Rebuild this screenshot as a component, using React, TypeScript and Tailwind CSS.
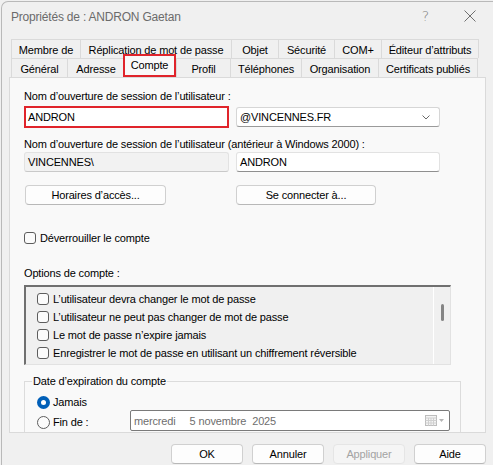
import React from 'react';

type Tab = { label: string; w: string; active?: boolean };

const backTabs: Tab[] = [
  { label: 'Membre de', w: 'w-[70px]' },
  { label: 'Réplication de mot de passe', w: 'w-[152px]' },
  { label: 'Objet', w: 'w-[48px]' },
  { label: 'Sécurité', w: 'w-[57px]' },
  { label: 'COM+', w: 'w-[48px]' },
  { label: 'Éditeur d’attributs', w: 'w-[98px]' },
];

const frontTabs: Tab[] = [
  { label: 'Général', w: 'w-[57px]' },
  { label: 'Adresse', w: 'w-[58px]' },
  { label: 'Compte', w: 'w-[53px]', active: true },
  { label: 'Profil', w: 'w-[55px]' },
  { label: 'Téléphones', w: 'w-[72px]' },
  { label: 'Organisation', w: 'w-[78px]' },
  { label: 'Certificats publiés', w: 'w-[100px]' },
];

const accountOptions = [
  'L’utilisateur devra changer le mot de passe',
  'L’utilisateur ne peut pas changer de mot de passe',
  'Le mot de passe n’expire jamais',
  'Enregistrer le mot de passe en utilisant un chiffrement réversible',
];

function Check() {
  return <span className="w-[12px] h-[12px] shrink-0 rounded-[3px] border border-[#5d5d5d] bg-[#fbfbfb]" />;
}

function Radio({ on }: { on?: boolean }) {
  if (on) {
    return (
      <span className="w-[13px] h-[13px] shrink-0 rounded-full bg-[#005fb8] flex items-center justify-center">
        <span className="w-[5px] h-[5px] rounded-full bg-white" />
      </span>
    );
  }
  return <span className="w-[13px] h-[13px] shrink-0 rounded-full border border-[#5d5d5d] bg-[#fbfbfb]" />;
}

function TabButton({ tab }: { tab: Tab }) {
  if (tab.active) {
    return (
      <div className={`${tab.w} h-[23px] relative z-10 -ml-[1px] border-2 border-[#e0242b] bg-[#f9f9f9] flex items-center justify-center pb-[2px]`}>
        {tab.label}
      </div>
    );
  }
  return (
    <div className={`${tab.w} h-[19px] border-t border-l border-r border-[#dadada] -mr-[1px] bg-[#f0f0f0] flex items-center justify-center pt-[1px]`}>
      {tab.label}
    </div>
  );
}

function PushButton({ label, w, disabled }: { label: string; w: string; disabled?: boolean }) {
  return (
    <div
      className={`${w} h-[20px] rounded-[4px] border flex items-center justify-center ${
        disabled
          ? 'bg-[#f5f5f5] border-[#e5e5e5] text-[#a3a3a3]'
          : 'bg-[#fdfdfd] border-[#d0d0d0] border-b-[#b8b8b8] text-black'
      }`}
    >
      {label}
    </div>
  );
}

export default function App() {
  return (
    <div className="w-[493px] h-[465px] overflow-hidden bg-[#f0f0f0] font-['Liberation_Sans',Arial,sans-serif] text-[11px] leading-[14px] tracking-[-0.15px] text-black">
      <div className="ml-[1px] mt-[1px] h-[464px] border-l border-t border-[#b9b9b9] rounded-tl-[7px] bg-[#f0f0f0]">
        {/* title bar */}
        <div className="h-[28px] flex items-center pl-[9px] pr-[17px]">
          <span className="text-[12px] tracking-[-0.2px] text-[#6b6b6b] pt-[1px]">Propriétés de : ANDRON Gaetan</span>
          <span className="ml-auto mr-[35px] text-[14px] text-[#7d7d7d] font-['DejaVu_Sans',sans-serif] font-light">?</span>
          <svg width="12" height="12" viewBox="0 0 12 12">
            <path d="M0.5 0.5 L11.5 11.5 M11.5 0.5 L0.5 11.5" stroke="#6f6f6f" strokeWidth="1" />
          </svg>
        </div>

        {/* tab strip */}
        <div className="mt-[9px] ml-[9px] flex flex-col">
          <div className="flex">
            {backTabs.map((t) => (
              <TabButton key={t.label} tab={t} />
            ))}
          </div>
          <div className="flex items-end h-[19px]">
            {frontTabs.map((t) => (
              <TabButton key={t.label} tab={t} />
            ))}
          </div>
        </div>

        {/* Compte page */}
        <div className="ml-[7px] w-[477px] h-[356px] border border-[#dadada] bg-[#f9f9f9] overflow-hidden pl-[14px] flex flex-col">
          <div className="mt-[11px]">Nom d’ouverture de session de l’utilisateur :</div>
          <div className="mt-[3px] flex items-center h-[22px]">
            <div className="w-[205px] h-[22px] border-2 border-[#e0242b] bg-white flex items-center pl-[2px]">ANDRON</div>
            <div className="ml-[7px] w-[204px] h-[20px] rounded-[3px] border border-[#d6d6d6] border-b-[#9a9a9a] bg-white flex items-center pl-[3px] pr-[9px]">
              <span>@VINCENNES.FR</span>
              <svg className="ml-auto" width="8" height="5" viewBox="0 0 8 5">
                <path d="M0.5 0.5 L4 4 L7.5 0.5" fill="none" stroke="#6a6a6a" strokeWidth="1" />
              </svg>
            </div>
          </div>

          <div className="mt-[9px]">Nom d’ouverture de session de l’utilisateur (antérieur à Windows 2000) :</div>
          <div className="mt-[1px] flex h-[20px]">
            <div className="w-[205px] h-[20px] rounded-[3px] border border-[#e2e2e2] border-b-[#c9c9c9] bg-[#f2f2f2] flex items-center pl-[3px]">
              VINCENNES\
            </div>
            <div className="ml-[7px] w-[204px] h-[20px] rounded-[3px] border border-[#e2e2e2] border-b-[#8f8f8f] bg-white flex items-center pl-[3px]">
              ANDRON
            </div>
          </div>

          <div className="mt-[13px] flex h-[21px]">
            <div className="ml-[1px]">
              <PushButton label="Horaires d’accès..." w="w-[141px]" />
            </div>
            <div className="ml-[70px]">
              <PushButton label="Se connecter à..." w="w-[140px]" />
            </div>
          </div>

          <div className="mt-[26px] flex items-center gap-[4px]">
            <Check />
            <span>Déverrouiller le compte</span>
          </div>

          <div className="mt-[21px]">Options de compte :</div>
          <div className="mt-[5px] w-[427px] h-[80px] shrink-0 flex border-t-2 border-l-2 border-t-[#707070] border-l-[#707070] border-r border-b border-r-[#e2e2e2] border-b-[#e2e2e2] bg-[#f0f0f0]">
            <div className="flex-1 pt-[3px] pl-[11px]">
              {accountOptions.map((o) => (
                <div key={o} className="h-[18px] flex items-center gap-[4px]">
                  <Check />
                  <span>{o}</span>
                </div>
              ))}
            </div>
            <div className="w-[17px] border-l border-white flex justify-center">
              <div className="mt-[17px] w-[3px] h-[17px] rounded-full bg-[#858585]" />
            </div>
          </div>

          <fieldset className="mt-[9px] w-[437px] shrink-0 border border-[#dcdcdc] pb-[20px]">
            <legend className="ml-[7px] px-[1px]">Date d’expiration du compte</legend>
            <div className="mt-[7px] pl-[12px] flex items-center gap-[3px]">
              <Radio on />
              <span>Jamais</span>
            </div>
            <div className="mt-[1px] pl-[12px] flex items-start">
              <div className="w-[93px] mt-[5px] flex items-center gap-[3px]">
                <Radio />
                <span>Fin de :</span>
              </div>
              <div className="w-[320px] h-[21px] rounded-[2px] border border-[#7a7a7a] bg-white flex items-center pl-[3px] pr-[4px] text-[#6e6e6e]">
                <span>mercredi</span>
                <span className="ml-[14px]">5 novembre</span>
                <span className="ml-[6px]">2025</span>
                <svg className="ml-auto" width="20" height="11" viewBox="0 0 20 11">
                  <rect x="0.5" y="0.5" width="11" height="10" fill="#f4f4f4" stroke="#bdbdbd" />
                  <path d="M0.5 3 H11.5 M0.5 5.5 H11.5 M0.5 8 H11.5 M3.5 3 V10.5 M6 3 V10.5 M8.5 3 V10.5" stroke="#d0d0d0" strokeWidth="1" />
                  <path d="M14 4 L19 4 L16.5 7 Z" fill="#b5b5b5" />
                </svg>
              </div>
            </div>
          </fieldset>
        </div>

        {/* dialog buttons */}
        <div className="mt-[11px] flex justify-end gap-[9px] pr-[7px]">
          <PushButton label="OK" w="w-[72px]" />
          <PushButton label="Annuler" w="w-[72px]" />
          <PushButton label="Appliquer" w="w-[72px]" disabled />
          <PushButton label="Aide" w="w-[72px]" />
        </div>
      </div>
    </div>
  );
}
